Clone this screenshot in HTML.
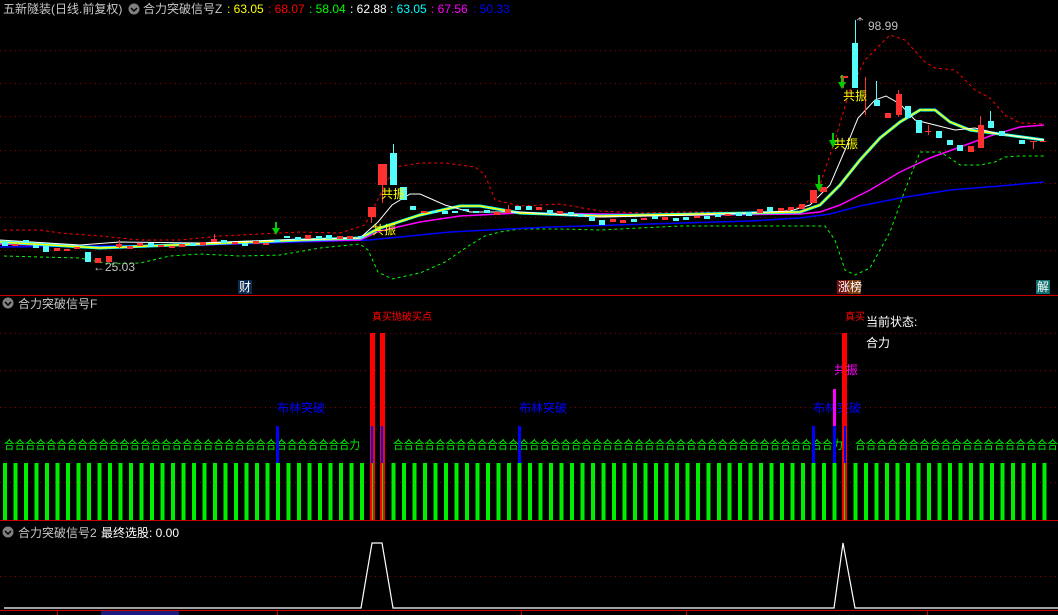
<!DOCTYPE html><html><head><meta charset="utf-8"><style>
html,body{margin:0;padding:0;background:#000;width:1058px;height:615px;overflow:hidden}
svg{display:block}
text{font-family:"Liberation Sans","Noto Sans CJK SC",sans-serif;font-size:12px}
</style></head><body>
<svg width="1058" height="615" viewBox="0 0 1058 615" xmlns="http://www.w3.org/2000/svg">
<rect width="1058" height="615" fill="#000"/>
<!-- grid main -->
<g stroke="#8b0000" stroke-dasharray="1,4" stroke-width="1">
<line x1="0" y1="50.5" x2="1058" y2="50.5"/><line x1="0" y1="83.5" x2="1058" y2="83.5"/><line x1="0" y1="116.5" x2="1058" y2="116.5"/><line x1="0" y1="150.5" x2="1058" y2="150.5"/><line x1="0" y1="183.5" x2="1058" y2="183.5"/><line x1="0" y1="217.5" x2="1058" y2="217.5"/><line x1="0" y1="250.5" x2="1058" y2="250.5"/>
<line x1="0" y1="333.5" x2="1058" y2="333.5"/><line x1="0" y1="370.5" x2="1058" y2="370.5"/><line x1="0" y1="407.5" x2="1058" y2="407.5"/><line x1="0" y1="482.5" x2="1058" y2="482.5"/>
<line x1="0" y1="576.5" x2="1058" y2="576.5"/>
</g>
<!-- header -->
<text x="3" y="13" fill="#c8c8c8">五新隧装(日线.前复权)</text>
<circle cx="134" cy="9" r="5.5" fill="#808080"/><path d="M131 8l3 3 3-3" stroke="#000" stroke-width="1.5" fill="none"/>
<text x="143" y="13" fill="#c8c8c8">合力突破信号Z</text>
<text x="227" y="13" fill="#ff0">: 63.05</text>
<text x="268" y="13" fill="#f00">: 68.07</text>
<text x="309" y="13" fill="#0f0">: 58.04</text>
<text x="350" y="13" fill="#fff">: 62.88</text>
<text x="390" y="13" fill="#0ff">: 63.05</text>
<text x="431" y="13" fill="#f0f">: 67.56</text>
<text x="473" y="13" fill="#00f">: 50.33</text>
<!-- bollinger -->
<polyline fill="none" stroke="#f00" stroke-dasharray="3,3" points="4,230 40,230 60,233 100,236 140,240 180,240 220,236 260,234 300,232 340,233 365,225 380,195 395,167 420,163 445,163 475,167 485,175 495,200 520,206 560,204 600,211 640,213 680,212 720,212 760,213 790,210 805,205 820,185 835,140 850,90 865,60 890,35 905,40 925,62 935,68 955,70 975,90 990,98 1005,115 1020,123 1044,124"/>
<polyline fill="none" stroke="#0f0" stroke-dasharray="3,3" points="4,256 40,257 80,258 110,264 140,263 170,256 200,254 240,256 280,255 320,248 360,244 368,250 378,272 392,279 420,273 445,262 470,245 485,236 500,232 520,229 560,229 600,230 640,228 680,226 720,226 760,226 800,226 825,226 835,240 845,270 855,275 870,268 890,232 905,190 920,152 940,152 950,158 960,165 980,165 995,162 1005,157 1020,156 1044,156"/>
<!-- MAs -->
<polyline fill="none" stroke="#00f" stroke-width="1.5" points="0,247 100,246 200,245 300,242 370,240 450,232 550,227 650,224 750,221 800,218 830,214 860,206 900,198 950,190 1000,186 1044,182"/>
<polyline fill="none" stroke="#f0f" stroke-width="1.5" points="0,244 100,247 200,245 300,241 360,240 380,231 420,222 460,216 520,213 600,214 700,215 800,214 820,212 840,205 870,190 900,172 930,158 960,147 990,136 1020,127 1044,125"/>
<polyline fill="none" stroke="#0ff" stroke-width="3" points="0,242 100,248 200,244 300,240 360,238 380,228 420,215 460,206 480,206 520,213 600,216 700,214 800,212 820,205 840,185 860,160 880,138 900,122 920,110 935,110 950,122 970,130 1000,134 1044,140"/>
<polyline fill="none" stroke="#ff0" stroke-width="1.5" points="0,242 100,248 200,244 300,240 360,238 380,228 420,215 460,206 480,206 520,213 600,216 700,214 800,212 820,205 840,185 860,160 880,138 900,122 920,110 935,110 950,122 970,130 1000,134 1044,140"/>
<polyline fill="none" stroke="#fff" stroke-width="1" points="0,240 80,245 120,242 200,243 280,240 360,238 378,222 392,205 410,194 420,194 445,205 470,212 520,212 600,217 700,215 790,211 810,205 830,185 845,150 858,118 875,100 886,96 900,104 915,120 935,125 955,130 975,128 1000,134 1044,140"/>
<!-- candles -->
<g fill="#54fcfc">
<rect x="2" y="242" width="6" height="4"/><rect x="23" y="240" width="6" height="3"/><rect x="33" y="245" width="6" height="3"/><rect x="43" y="246" width="6" height="6"/><rect x="85" y="252" width="6" height="10"/><rect x="148" y="243" width="6" height="4"/><rect x="190" y="243" width="6" height="3"/><rect x="221" y="240" width="6" height="3"/><rect x="242" y="243" width="6" height="3"/><rect x="274" y="240" width="6" height="2"/><rect x="284" y="236" width="6" height="2"/><rect x="295" y="237" width="6" height="3"/><rect x="316" y="236" width="6" height="3"/><rect x="326" y="235" width="6" height="4"/><rect x="358" y="236" width="6" height="2"/>
<rect x="390" y="153" width="7" height="32"/><rect x="393" y="144" width="1" height="10"/><rect x="400" y="187" width="7" height="13"/><rect x="410" y="206" width="6" height="4"/>
<rect x="431" y="211" width="6" height="2"/><rect x="442" y="211" width="6" height="3"/><rect x="452" y="211" width="6" height="2"/><rect x="463" y="209" width="6" height="2"/><rect x="473" y="211" width="6" height="2"/><rect x="484" y="210" width="6" height="3"/><rect x="515" y="206" width="6" height="4"/><rect x="526" y="206" width="6" height="4"/><rect x="547" y="210" width="6" height="4"/><rect x="568" y="212" width="6" height="3"/><rect x="578" y="214" width="6" height="3"/><rect x="589" y="216" width="6" height="5"/><rect x="599" y="220" width="6" height="5"/><rect x="631" y="219" width="6" height="3"/><rect x="652" y="216" width="6" height="3"/><rect x="673" y="218" width="6" height="3"/><rect x="683" y="217" width="6" height="3"/><rect x="704" y="216" width="6" height="3"/><rect x="715" y="214" width="6" height="3"/><rect x="736" y="213" width="6" height="3"/><rect x="746" y="212" width="6" height="4"/><rect x="767" y="207" width="6" height="4"/>
<rect x="852" y="43" width="6" height="45"/><rect x="855" y="20" width="1" height="24"/><rect x="874" y="100" width="6" height="6"/><rect x="876" y="81" width="1" height="20"/><rect x="905" y="106" width="6" height="12"/><rect x="916" y="120" width="6" height="13"/><rect x="936" y="131" width="6" height="7"/><rect x="947" y="140" width="6" height="5"/><rect x="957" y="145" width="6" height="6"/><rect x="988" y="121" width="6" height="7"/><rect x="990" y="111" width="1" height="10"/><rect x="999" y="131" width="6" height="5"/><rect x="1019" y="140" width="6" height="4"/>
</g>
<g fill="#ff3232">
<rect x="12" y="244" width="6" height="2"/><rect x="54" y="248" width="6" height="3"/><rect x="64" y="249" width="6" height="2"/><rect x="74" y="247" width="6" height="2"/><rect x="95" y="258" width="6" height="5"/><rect x="106" y="256" width="6" height="6"/><rect x="116" y="244" width="6" height="3"/><rect x="119" y="240" width="1" height="8"/><rect x="127" y="246" width="6" height="3"/><rect x="137" y="243" width="6" height="3"/><rect x="158" y="245" width="6" height="2"/><rect x="169" y="246" width="6" height="2"/><rect x="179" y="244" width="6" height="3"/><rect x="200" y="242" width="6" height="3"/><rect x="211" y="239" width="6" height="3"/><rect x="214" y="234" width="1" height="6"/><rect x="232" y="242" width="6" height="2"/><rect x="253" y="241" width="6" height="3"/><rect x="263" y="243" width="6" height="2"/><rect x="305" y="235" width="6" height="4"/><rect x="337" y="236" width="6" height="3"/><rect x="347" y="236" width="6" height="3"/>
<rect x="368" y="207" width="8" height="10"/><rect x="371" y="217" width="1" height="6"/><rect x="378" y="164" width="9" height="21"/><rect x="382" y="185" width="1" height="18"/>
<rect x="421" y="211" width="6" height="2"/><rect x="494" y="212" width="6" height="3"/><rect x="505" y="209" width="6" height="4"/><rect x="508" y="205" width="1" height="4"/><rect x="536" y="207" width="6" height="3"/><rect x="557" y="211" width="6" height="3"/><rect x="610" y="219" width="6" height="3"/><rect x="620" y="220" width="6" height="3"/><rect x="641" y="218" width="6" height="2"/><rect x="662" y="217" width="6" height="3"/><rect x="694" y="216" width="6" height="2"/><rect x="725" y="214" width="6" height="2"/><rect x="757" y="209" width="6" height="4"/><rect x="778" y="208" width="6" height="3"/><rect x="788" y="207" width="6" height="3"/><rect x="799" y="204" width="6" height="5"/>
<rect x="810" y="190" width="7" height="13"/><rect x="820" y="187" width="7" height="5"/><rect x="840" y="76" width="8" height="2"/><rect x="843" y="76" width="1" height="12"/><rect x="865" y="77" width="1" height="38"/><rect x="885" y="113" width="6" height="5"/><rect x="896" y="94" width="6" height="21"/><rect x="898" y="90" width="1" height="27"/><rect x="925" y="131" width="6" height="1"/><rect x="928" y="125" width="1" height="10"/><rect x="968" y="146" width="6" height="6"/><rect x="978" y="125" width="6" height="23"/><rect x="980" y="116" width="1" height="10"/><rect x="1030" y="141" width="7" height="1"/><rect x="1033" y="141" width="1" height="8"/><rect x="1040" y="141" width="6" height="1"/>
</g>
<path d="M860 21v-4M857 20l3-2 3 2" stroke="#aaa" fill="none"/>
<text x="868" y="30" fill="#c0c0c0">98.99</text>
<text x="93" y="271" fill="#c0c0c0">←25.03</text>
<!-- arrows -->
<g fill="#0c0"><path d="M272 228h8l-4 7z M275 222h2v6h-2z"/><path d="M815 184h8l-4 8z M818 175h2v9h-2z"/><path d="M829 140h8l-4 8z M832 133h2v7h-2z"/><path d="M838 82h8l-4 7z M841 75h2v7h-2z"/></g>
<g fill="#ff0"><text x="372" y="234">共振</text><text x="381" y="198">共振</text><text x="834" y="148">共振</text><text x="843" y="100">共振</text></g>
<rect x="238" y="280" width="14" height="14" fill="#0a2a50"/><text x="239" y="291" fill="#fff">财</text>
<rect x="837" y="280" width="11" height="14" fill="#701010"/><rect x="848" y="280" width="13" height="14" fill="#7a3a10"/><text x="838" y="291" fill="#fff">涨榜</text>
<rect x="1036" y="280" width="14" height="14" fill="#127070"/><text x="1037" y="291" fill="#fff">解</text>
<line x1="0" y1="295.5" x2="1058" y2="295.5" stroke="#c00"/>
<!-- middle panel -->
<circle cx="8" cy="303" r="5.5" fill="#808080"/><path d="M5 302l3 3 3-3" stroke="#000" stroke-width="1.5" fill="none"/>
<text x="18" y="308" fill="#c8c8c8">合力突破信号F</text>
<text x="372" y="320" fill="#f00" font-size="10" style="font-size:10px">真买抛破买点</text>
<text x="845" y="320" fill="#f00" style="font-size:10px">真买</text>
<text x="866" y="326" fill="#fff">当前状态:</text>
<text x="866" y="347" fill="#fff">合力</text>
<text x="834" y="374" fill="#f0f">共振</text>
<g fill="#00f"><text x="277" y="412">布林突破</text><text x="519" y="412">布林突破</text><text x="813" y="412">布林突破</text></g>
<!-- green bars -->
<g fill="#0e0">
<path d="M3 463h4v57h-4z M13.5 463h4v57h-4z M24 463h4v57h-4z M34.5 463h4v57h-4z M45 463h4v57h-4z M55.5 463h4v57h-4z M66 463h4v57h-4z M76.5 463h4v57h-4z M87 463h4v57h-4z M97.5 463h4v57h-4z M108 463h4v57h-4z M118.5 463h4v57h-4z M129 463h4v57h-4z M139.5 463h4v57h-4z M150 463h4v57h-4z M160.5 463h4v57h-4z M171 463h4v57h-4z M181.5 463h4v57h-4z M192 463h4v57h-4z M202.5 463h4v57h-4z M213 463h4v57h-4z M223.5 463h4v57h-4z M234 463h4v57h-4z M244.5 463h4v57h-4z M255 463h4v57h-4z M265.5 463h4v57h-4z M276 463h4v57h-4z M286.5 463h4v57h-4z M297 463h4v57h-4z M307.5 463h4v57h-4z M318 463h4v57h-4z M328.5 463h4v57h-4z M339 463h4v57h-4z M349.5 463h4v57h-4z M360 463h4v57h-4z M370.5 463h4v57h-4z M381 463h4v57h-4z M391.5 463h4v57h-4z M402 463h4v57h-4z M412.5 463h4v57h-4z M423 463h4v57h-4z M433.5 463h4v57h-4z M444 463h4v57h-4z M454.5 463h4v57h-4z M465 463h4v57h-4z M475.5 463h4v57h-4z M486 463h4v57h-4z M496.5 463h4v57h-4z M507 463h4v57h-4z M517.5 463h4v57h-4z M528 463h4v57h-4z M538.5 463h4v57h-4z M549 463h4v57h-4z M559.5 463h4v57h-4z M570 463h4v57h-4z M580.5 463h4v57h-4z M591 463h4v57h-4z M601.5 463h4v57h-4z M612 463h4v57h-4z M622.5 463h4v57h-4z M633 463h4v57h-4z M643.5 463h4v57h-4z M654 463h4v57h-4z M664.5 463h4v57h-4z M675 463h4v57h-4z M685.5 463h4v57h-4z M696 463h4v57h-4z M706.5 463h4v57h-4z M717 463h4v57h-4z M727.5 463h4v57h-4z M738 463h4v57h-4z M748.5 463h4v57h-4z M759 463h4v57h-4z M769.5 463h4v57h-4z M780 463h4v57h-4z M790.5 463h4v57h-4z M801 463h4v57h-4z M811.5 463h4v57h-4z M822 463h4v57h-4z M832.5 463h4v57h-4z M843 463h4v57h-4z M853.5 463h4v57h-4z M864 463h4v57h-4z M874.5 463h4v57h-4z M885 463h4v57h-4z M895.5 463h4v57h-4z M906 463h4v57h-4z M916.5 463h4v57h-4z M927 463h4v57h-4z M937.5 463h4v57h-4z M948 463h4v57h-4z M958.5 463h4v57h-4z M969 463h4v57h-4z M979.5 463h4v57h-4z M990 463h4v57h-4z M1000.5 463h4v57h-4z M1011 463h4v57h-4z M1021.5 463h4v57h-4z M1032 463h4v57h-4z M1042.5 463h4v57h-4z"/>
</g>
<!-- green 合力 text row -->
<text x="4" y="449" fill="#0e0" textLength="356" lengthAdjust="spacingAndGlyphs">合合合合合合合合合合合合合合合合合合合合合合合合合合合合合合合合合力</text>
<text x="393" y="449" fill="#0e0" textLength="450" lengthAdjust="spacingAndGlyphs">合合合合合合合合合合合合合合合合合合合合合合合合合合合合合合合合合合合合合合合合合合力</text>
<text x="855" y="449" fill="#0e0" textLength="203" lengthAdjust="spacingAndGlyphs">合合合合合合合合合合合合合合合合合合合</text>
<g fill="#00f"><rect x="276" y="426" width="3" height="37"/><rect x="518" y="426" width="3" height="37"/><rect x="812" y="426" width="3" height="37"/><rect x="833" y="426" width="3" height="37"/><rect x="843" y="426" width="3" height="37"/><rect x="371" y="426" width="3" height="37"/><rect x="381" y="426" width="3" height="37"/></g>
<rect x="833" y="389" width="3" height="37" fill="#f0f"/>
<g fill="#f00"><rect x="370" y="333" width="5" height="187"/><rect x="380" y="333" width="5" height="187"/><rect x="842" y="333" width="5" height="187"/></g>
<g fill="#00f"><rect x="371" y="426" width="2" height="37"/><rect x="381" y="426" width="2" height="37"/><rect x="844" y="426" width="2" height="37"/></g>
<g fill="#0e0"><rect x="372" y="463" width="1" height="57"/><rect x="382" y="463" width="1" height="57"/><rect x="844" y="463" width="1" height="57"/></g>
<line x1="0" y1="520.5" x2="1058" y2="520.5" stroke="#c00"/>
<!-- bottom panel -->
<circle cx="8" cy="532" r="5.5" fill="#808080"/><path d="M5 531l3 3 3-3" stroke="#000" stroke-width="1.5" fill="none"/>
<text x="18" y="537" fill="#c8c8c8">合力突破信号2</text>
<text x="101" y="537" fill="#fff">最终选股: 0.00</text>
<polyline fill="none" stroke="#fff" stroke-width="1.2" points="4,608 361,608 372,543 382,543 393,608 834,608 843,543 855,608 1058,608"/>
<line x1="0" y1="610.5" x2="1058" y2="610.5" stroke="#c00"/>
<rect x="101" y="611" width="78" height="4" fill="#1a1a80"/>
<g stroke="#c00"><line x1="57.5" y1="611" x2="57.5" y2="615"/><line x1="277.5" y1="611" x2="277.5" y2="615"/><line x1="521.5" y1="611" x2="521.5" y2="615"/><line x1="686.5" y1="611" x2="686.5" y2="615"/><line x1="927.5" y1="611" x2="927.5" y2="615"/></g>
</svg>
</body></html>
